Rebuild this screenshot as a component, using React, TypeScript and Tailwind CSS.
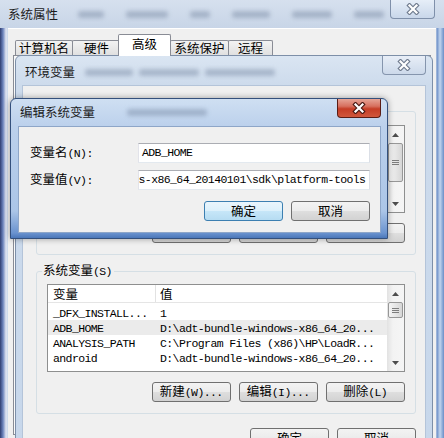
import React from "react";

const CJK = /[\u3000-\u9fff\uff00-\uffef]/;

// SimSun-like run: CJK in Noto, ascii in a narrow mono
function T({ s }: { s: string }) {
  const parts = s.match(/[\u3000-\u9fff\uff00-\uffef]+|[^\u3000-\u9fff\uff00-\uffef]+/g) ?? [];
  return (
    <>
      {parts.map((p, i) =>
        CJK.test(p) ? (
          <span key={i} className="font-['Noto_Sans_CJK_SC',sans-serif] text-[12.5px]">
            {p}
          </span>
        ) : (
          <span key={i} className="mr-[0.6px] font-['Liberation_Mono',monospace] text-[11.5px] tracking-[-0.6px]">
            {p}
          </span>
        )
      )}
    </>
  );
}

function XGlyph({ dim }: { dim?: boolean }) {
  return (
    <svg width="14" height="12" viewBox="0 0 14 12">
      <path d="M3.5 2.5 L10.5 9.5 M10.5 2.5 L3.5 9.5" stroke={dim ? "#6f7b8e" : "#4a1a14"} strokeWidth="4.4" strokeLinecap="square" fill="none" />
      <path d="M3.5 2.5 L10.5 9.5 M10.5 2.5 L3.5 9.5" stroke="#ffffff" strokeWidth="2.2" strokeLinecap="square" fill="none" />
    </svg>
  );
}

function Arrow({ up }: { up?: boolean }) {
  return (
    <svg width="7" height="4" viewBox="0 0 7 4">
      <path d={up ? "M0 4 L3.5 0 L7 4Z" : "M0 0 L3.5 4 L7 0Z"} fill="#4d4d4d" />
    </svg>
  );
}

function ScrollBar({ thumb }: { thumb: string }) {
  return (
    <div className="flex h-full w-[17px] shrink-0 flex-col bg-[linear-gradient(90deg,#e2e2e2,#f3f3f3_35%,#f5f5f5)]">
      <div className="flex h-[17px] items-center justify-center">
        <Arrow up />
      </div>
      <div
        className={
          thumb +
          " mx-[1px] flex flex-col items-center justify-center gap-[1px] rounded-[2px] border border-[#979797] bg-[linear-gradient(90deg,#f4f4f4,#e6e6e6_50%,#d6d6d6)]"
        }
      >
        <div className="h-[1px] w-[7px] bg-[#7d7d7d]" />
        <div className="h-[1px] w-[7px] bg-[#7d7d7d]" />
        <div className="h-[1px] w-[7px] bg-[#7d7d7d]" />
      </div>
      <div className="flex-1" />
      <div className="flex h-[17px] items-center justify-center">
        <Arrow />
      </div>
    </div>
  );
}

type Row = [string, string];

function VarList({ rows, sel, thumb, hidden }: { rows: Row[]; sel: number; thumb: string; hidden?: boolean }) {
  return (
    <div className="flex h-[88px] border border-[#8e8f8f] bg-white">
      <div className="flex-1 overflow-hidden whitespace-pre">
        <div className="flex h-[18px] items-center border-b border-[#e5e5e5] leading-[17px]">
          <div className="h-[17px] w-[108px] border-r border-[#e2e2e2] pl-[5px]">{!hidden && <T s="变量" />}</div>
          <div className="pl-[4px]">{!hidden && <T s="值" />}</div>
        </div>
        <div className="pt-[2px]">
          {rows.map(([k, v], i) => (
            <div key={k} className={i === sel ? "flex h-[15px] items-center bg-[#ebebeb] leading-[15px]" : "flex h-[15px] items-center leading-[15px]"}>
              <div className="w-[108px] pl-[5px]">
                <T s={k} />
              </div>
              <div className="pl-[4px]">
                <T s={v} />
              </div>
            </div>
          ))}
        </div>
      </div>
      <ScrollBar thumb={thumb} />
    </div>
  );
}

function Btn({ label, def }: { label?: string; def?: boolean }) {
  return (
    <div
      className={
        def
          ? "flex h-[20px] w-[79px] items-center justify-center rounded-[3px] border border-[#3c7fb1] bg-[linear-gradient(180deg,#e9f5fc_0%,#dcf0fb_48%,#c6e6f8_52%,#b6dcf2_100%)] leading-none"
          : "flex h-[20px] w-[79px] items-center justify-center rounded-[3px] border border-[#707070] bg-[linear-gradient(180deg,#f3f3f3_0%,#ececec_48%,#dedede_52%,#d2d2d2_100%)] leading-none"
      }
    >
      {label && (
        <span className="whitespace-pre">
          <T s={label} />
        </span>
      )}
    </div>
  );
}

function Blob({ w }: { w: string }) {
  return <div className={w + " h-[7px] rounded-[3px] bg-[#6a7a95]/40 blur-[2px]"} />;
}

const sysRows: Row[] = [
  ["_DFX_INSTALL...", "1"],
  ["ADB_HOME", "D:\\adt-bundle-windows-x86_64_20..."],
  ["ANALYSIS_PATH", "C:\\Program Files (x86)\\HP\\LoadR..."],
  ["android", "D:\\adt-bundle-windows-x86_64_20..."],
];

export default function App() {
  return (
    <div className="relative h-[438px] w-[444px] overflow-hidden bg-[linear-gradient(90deg,#2f3d70_0px,#6c84bd_3px,#dfe4f2_6px,#c9d7ea_8px,#c9d7ea_436px,#6f91c8_437px,#c2d5ee_440px,#6a8ec7_444px)] font-['Noto_Sans_CJK_SC',sans-serif] text-[12.5px] text-black">
      {/* 系统属性 title bar */}
      <div className="flex h-[28px] items-start bg-[linear-gradient(180deg,#d6e0ee,#c8d5e7)]">
        <div className="flex h-[28px] items-center pl-[8px]">
          <span className="leading-none text-[#1b1b1b]">系统属性</span>
          <div className="ml-[20px] flex items-center gap-[22px]">
            <Blob w="w-[26px]" />
            <Blob w="w-[42px]" />
            <Blob w="w-[20px]" />
            <Blob w="w-[38px]" />
            <Blob w="w-[40px]" />
            <Blob w="w-[30px]" />
          </div>
        </div>
        <div className="ml-auto mr-[9px] flex h-[19px] w-[45px] items-center justify-center rounded-b-[4px] border border-t-0 border-[#7f90aa] bg-[linear-gradient(180deg,#e6eef8,#c9d7ea)]">
          <XGlyph dim />
        </div>
      </div>

      {/* 系统属性 client */}
      <div className="mx-[8px] h-[410px] border-t border-white bg-[#f0f0f0]">
        <div className="flex h-[26px] items-end pl-[7px] leading-none">
          <div className="flex h-[15px] w-[58px] items-center justify-center rounded-t-[2px] border border-b-0 border-[#898c95] bg-[linear-gradient(180deg,#f3f3f3,#e0e0e0)]">
            计算机名
          </div>
          <div className="-ml-[1px] flex h-[15px] w-[49px] items-center justify-center rounded-t-[2px] border border-b-0 border-[#898c95] bg-[linear-gradient(180deg,#f3f3f3,#e0e0e0)]">
            硬件
          </div>
          <div className="relative z-10 -mb-[1px] -ml-[3px] flex h-[22px] w-[53px] items-start justify-center rounded-t-[2px] border border-b-0 border-[#898c95] bg-white pt-[3px]">
            高级
          </div>
          <div className="-ml-[1px] flex h-[15px] w-[59px] items-center justify-center rounded-t-[2px] border border-b-0 border-[#898c95] bg-[linear-gradient(180deg,#f3f3f3,#e0e0e0)]">
            系统保护
          </div>
          <div className="-ml-[1px] flex h-[15px] w-[45px] items-center justify-center rounded-t-[2px] border border-b-0 border-[#898c95] bg-[linear-gradient(180deg,#f3f3f3,#e0e0e0)]">
            远程
          </div>
        </div>
        <div className="mx-[5px] h-[380px] border border-[#898c95] bg-[#fafafa]" />
      </div>

      {/* 环境变量 window */}
      <div className="absolute left-[15px] top-[55px] flex h-[400px] w-[418px] flex-col rounded-t-[6px] border border-[#7d8fa8] bg-[linear-gradient(180deg,#dae5f2_0px,#cddbec_29px,#c7d7eb_100%)]">
        <div className="flex h-[29px] shrink-0 items-start">
          <div className="flex h-[29px] items-center pl-[9px] pt-[3px]">
            <span className="leading-none text-[#1b1b1b]">环境变量</span>
            <div className="ml-[10px] flex items-center gap-[6px]">
              <Blob w="w-[48px]" />
              <Blob w="w-[60px]" />
              <Blob w="w-[70px]" />
            </div>
          </div>
          <div className="ml-auto mr-[6px] flex h-[19px] w-[44px] items-center justify-center rounded-b-[4px] border border-t-0 border-[#8595ad] bg-[linear-gradient(180deg,#e8eef7,#ccd9ea)]">
            <XGlyph dim />
          </div>
        </div>
        <div className="mx-[6px] flex-1 border border-[#b4c4d9] bg-[#f0f0f0] pl-[13px] pr-[9px] pt-[16px]">
          {/* user variables: covered by the edit dialog */}
          <fieldset className="rounded-[3px] border border-[#d5dfe5] px-[10px] pb-[11px] pt-[4px]">
            <legend className="-ml-[5px] px-[1px] leading-[16px]">
              <span className="inline-block h-[16px] w-[66px]" />
            </legend>
            <VarList rows={[]} sel={-1} thumb="h-[39px]" hidden />
            <div className="mt-[10px] flex justify-end gap-[8px]">
              <Btn />
              <Btn />
              <Btn />
            </div>
          </fieldset>
          <fieldset className="mt-[7px] rounded-[3px] border border-[#d5dfe5] px-[10px] pb-[11px] pt-[4px]">
            <legend className="-ml-[5px] px-[1px] leading-[16px]">
              <T s="系统变量(S)" />
            </legend>
            <VarList rows={sysRows} sel={1} thumb="h-[16px]" />
            <div className="mt-[10px] flex justify-end gap-[8px]">
              <Btn label="新建(W)..." />
              <Btn label="编辑(I)..." />
              <Btn label="删除(L)" />
            </div>
          </fieldset>
          <div className="mt-[14px] flex justify-end gap-[8px]">
            <Btn label="确定" />
            <Btn label="取消" />
          </div>
        </div>
      </div>

      {/* 编辑系统变量 dialog (active) */}
      <div className="absolute left-[10px] top-[98px] flex h-[141px] w-[378px] flex-col rounded-t-[6px] border border-[#34507c] bg-[linear-gradient(180deg,#cfdff2_0px,#bcd1ec_27px,#abc5e7_112px,#6a93cf_134px,#3f6cb0_141px)] shadow-[0_0_6px_rgba(0,0,0,0.35)]">
        <div className="flex h-[27px] shrink-0 items-start">
          <div className="flex h-[27px] items-center pl-[9px]">
            <span className="leading-none text-[#1b1b1b]">编辑系统变量</span>
            <div className="ml-[32px] flex items-center">
              <Blob w="w-[80px]" />
            </div>
          </div>
          <div className="ml-auto mr-[6px] flex h-[19px] w-[44px] items-center justify-center rounded-b-[4px] border border-t-0 border-[#5a1d15] bg-[linear-gradient(180deg,#e6a496_0%,#d7705f_40%,#c53d26_55%,#d0573c_100%)]">
            <XGlyph />
          </div>
        </div>
        <div className="ml-[7px] mr-[6px] h-[107px] shrink-0 border border-[#8ea6c8] bg-[#f0f0f0] pl-[11px] pr-[10px] pt-[16px]">
          <div className="flex h-[20px] items-center">
            <div className="w-[108px] whitespace-pre leading-none">
              <T s="变量名(N):" />
            </div>
            <div className="flex h-[20px] flex-1 items-center overflow-hidden border border-[#abadb3] border-b-[#e3e9ef] border-l-[#e2e3ea] border-r-[#dbdfe6] bg-white px-[3px] whitespace-pre leading-none">
              <T s="ADB_HOME" />
            </div>
          </div>
          <div className="mt-[7px] flex h-[20px] items-center">
            <div className="w-[108px] whitespace-pre leading-none">
              <T s="变量值(V):" />
            </div>
            <div className="flex h-[20px] flex-1 items-center justify-end overflow-hidden border border-[#abadb3] border-b-[#e3e9ef] border-l-[#e2e3ea] border-r-[#dbdfe6] bg-white pl-[1px] pr-[3px] whitespace-pre leading-none">
              <T s="s-x86_64_20140101\sdk\platform-tools" />
            </div>
          </div>
          <div className="mt-[11px] flex justify-end gap-[8px]">
            <Btn label="确定" def />
            <Btn label="取消" />
          </div>
        </div>
      </div>
    </div>
  );
}
